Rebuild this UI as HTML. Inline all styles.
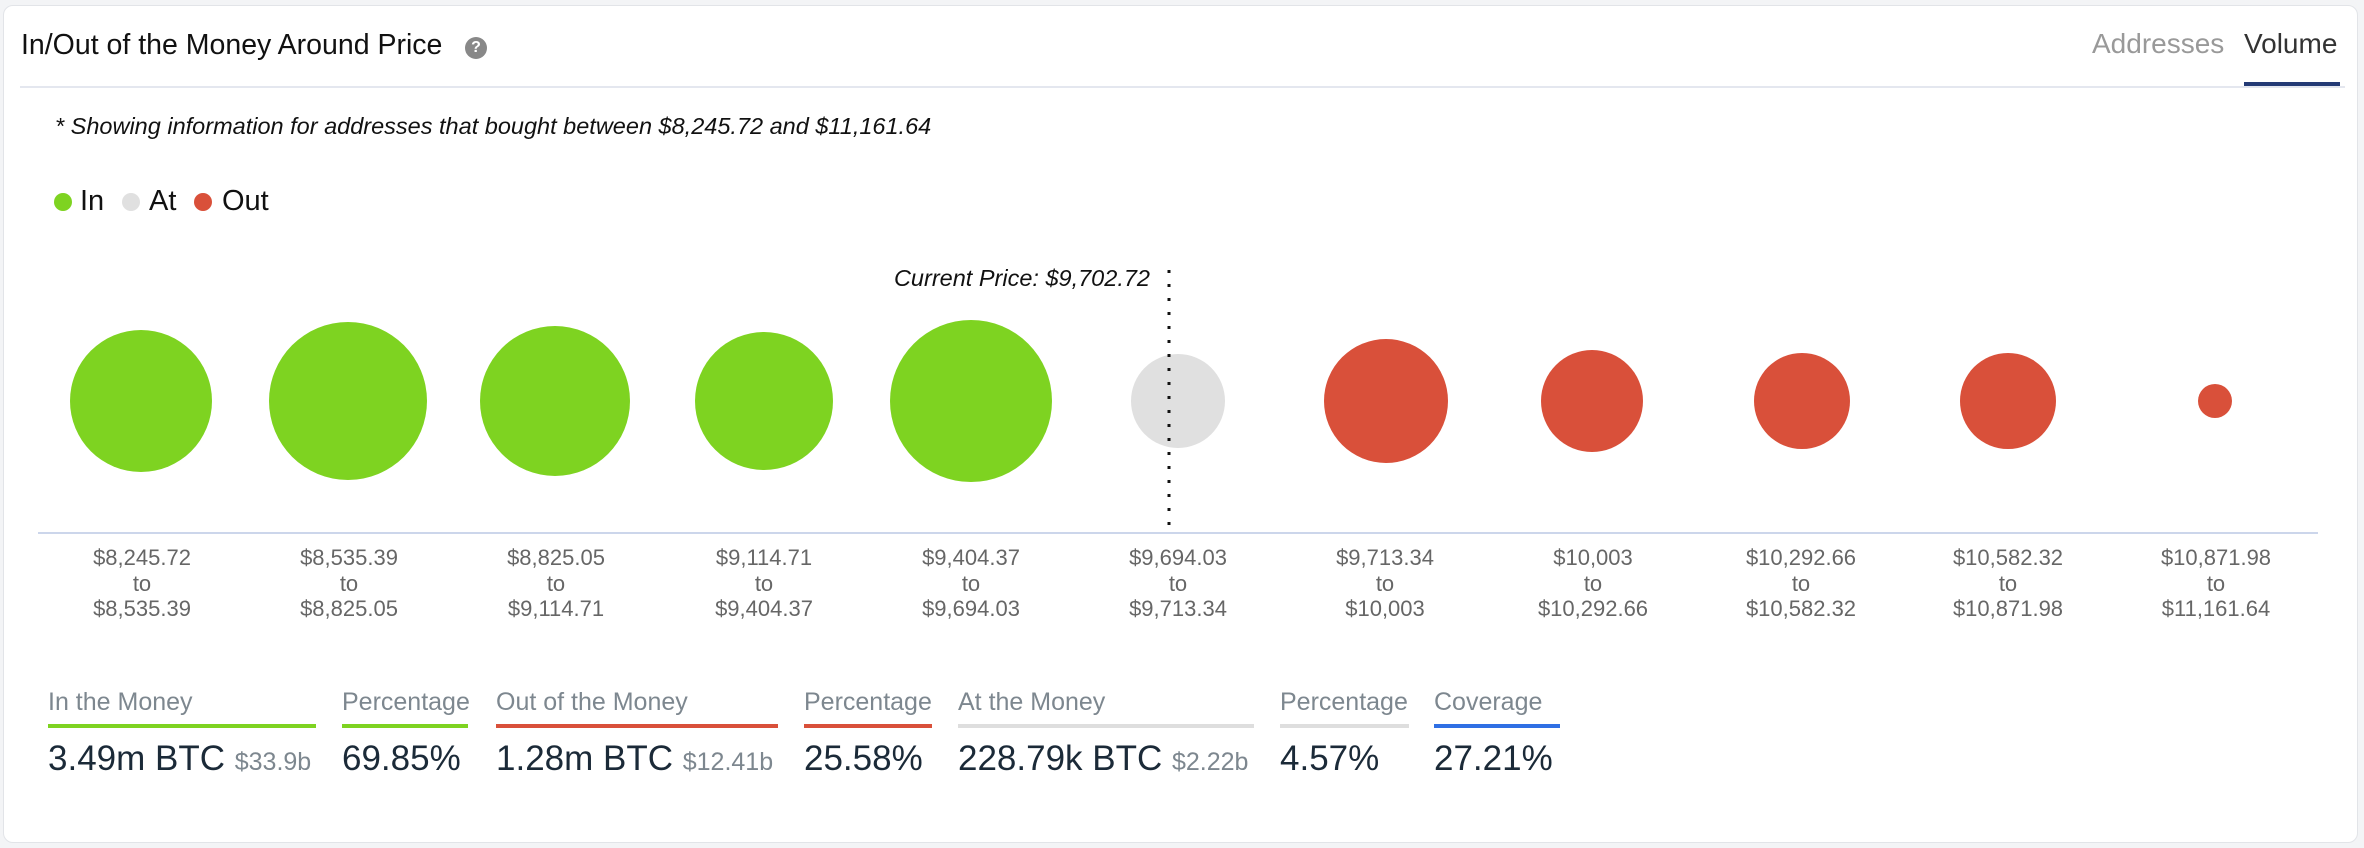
<!DOCTYPE html>
<html><head><meta charset="utf-8"><style>
html,body{margin:0;padding:0;width:2364px;height:848px;background:#f3f4f6;overflow:hidden;font-family:"Liberation Sans",sans-serif;}
.card{position:absolute;left:3px;top:5px;width:2353px;height:836px;background:#fff;border:1px solid #e2e4e8;border-radius:10px;}
.a{position:absolute;white-space:nowrap;}
.lbl{position:absolute;width:200px;text-align:center;font-size:22px;color:#666;line-height:25.5px;}
.sl{position:absolute;top:688px;font-size:25px;color:#7d878f;}
.bar{position:absolute;top:724px;height:4px;}
.sv{position:absolute;top:739px;font-size:35px;color:#1b2a38;white-space:nowrap;}
.sv small{font-size:25px;color:#7d878f;}
</style></head><body>
<div class="card"></div>
<div class="a" style="left:21px;top:29px;font-size:28.5px;color:#111;">In/Out of the Money Around Price</div>
<div class="a" style="left:465px;top:37px;width:22px;height:22px;border-radius:50%;background:#888;color:#fff;font-size:16px;font-weight:bold;text-align:center;line-height:22px;">?</div>
<div class="a" style="left:2092px;top:28px;font-size:28px;color:#999;">Addresses</div>
<div class="a" style="left:2244px;top:28px;font-size:28px;color:#333;">Volume</div>
<div class="a" style="left:20px;top:86px;width:2325px;height:2px;background:#e4e7ef;"></div>
<div class="a" style="left:2244px;top:82px;width:96px;height:4px;background:#233a75;"></div>
<div class="a" style="left:55px;top:113px;font-size:23.5px;font-style:italic;color:#111;">* Showing information for addresses that bought between $8,245.72 and $11,161.64</div>
<div class="a" style="left:54px;top:193px;width:18px;height:18px;border-radius:50%;background:#7ed321;"></div>
<div class="a" style="left:80px;top:185px;font-size:29px;color:#111;">In</div>
<div class="a" style="left:122px;top:193px;width:18px;height:18px;border-radius:50%;background:#e0e0e0;"></div>
<div class="a" style="left:149px;top:185px;font-size:29px;color:#111;">At</div>
<div class="a" style="left:194px;top:193px;width:18px;height:18px;border-radius:50%;background:#d9503a;"></div>
<div class="a" style="left:222px;top:185px;font-size:29px;color:#111;">Out</div>
<div class="a" style="right:1214px;top:265px;font-size:23.5px;font-style:italic;color:#111;">Current Price: $9,702.72</div>
<svg class="a" style="left:0;top:0" width="2364" height="848">
<circle cx="141" cy="401" r="71" fill="#7ed321"/>
<circle cx="348" cy="401" r="79" fill="#7ed321"/>
<circle cx="555" cy="401" r="75" fill="#7ed321"/>
<circle cx="764" cy="401" r="69" fill="#7ed321"/>
<circle cx="971" cy="401" r="81" fill="#7ed321"/>
<circle cx="1178" cy="401" r="47" fill="#e0e0e0"/>
<circle cx="1386" cy="401" r="62" fill="#d9503a"/>
<circle cx="1592" cy="401" r="51" fill="#d9503a"/>
<circle cx="1802" cy="401" r="48" fill="#d9503a"/>
<circle cx="2008" cy="401" r="48" fill="#d9503a"/>
<circle cx="2215" cy="401" r="17" fill="#d9503a"/>
<line x1="1169" y1="270" x2="1169" y2="533" stroke="#111" stroke-width="3" stroke-dasharray="3,11"/>
<line x1="38" y1="533" x2="2318" y2="533" stroke="#ccd6eb" stroke-width="2"/>
</svg>
<div class="lbl" style="left:42px;top:545px">$8,245.72<br>to<br>$8,535.39</div>
<div class="lbl" style="left:249px;top:545px">$8,535.39<br>to<br>$8,825.05</div>
<div class="lbl" style="left:456px;top:545px">$8,825.05<br>to<br>$9,114.71</div>
<div class="lbl" style="left:664px;top:545px">$9,114.71<br>to<br>$9,404.37</div>
<div class="lbl" style="left:871px;top:545px">$9,404.37<br>to<br>$9,694.03</div>
<div class="lbl" style="left:1078px;top:545px">$9,694.03<br>to<br>$9,713.34</div>
<div class="lbl" style="left:1285px;top:545px">$9,713.34<br>to<br>$10,003</div>
<div class="lbl" style="left:1493px;top:545px">$10,003<br>to<br>$10,292.66</div>
<div class="lbl" style="left:1701px;top:545px">$10,292.66<br>to<br>$10,582.32</div>
<div class="lbl" style="left:1908px;top:545px">$10,582.32<br>to<br>$10,871.98</div>
<div class="lbl" style="left:2116px;top:545px">$10,871.98<br>to<br>$11,161.64</div>

<div class="sl" style="left:48px">In the Money</div>
<div class="bar" style="left:48px;width:268px;background:#7ed321"></div>
<div class="sv" style="left:48px">3.49m BTC <small>$33.9b</small></div>
<div class="sl" style="left:342px">Percentage</div>
<div class="bar" style="left:342px;width:126px;background:#7ed321"></div>
<div class="sv" style="left:342px">69.85%</div>
<div class="sl" style="left:496px">Out of the Money</div>
<div class="bar" style="left:496px;width:282px;background:#d9503a"></div>
<div class="sv" style="left:496px">1.28m BTC <small>$12.41b</small></div>
<div class="sl" style="left:804px">Percentage</div>
<div class="bar" style="left:804px;width:128px;background:#d9503a"></div>
<div class="sv" style="left:804px">25.58%</div>
<div class="sl" style="left:958px">At the Money</div>
<div class="bar" style="left:958px;width:296px;background:#dedede"></div>
<div class="sv" style="left:958px">228.79k BTC <small>$2.22b</small></div>
<div class="sl" style="left:1280px">Percentage</div>
<div class="bar" style="left:1280px;width:129px;background:#dedede"></div>
<div class="sv" style="left:1280px">4.57%</div>
<div class="sl" style="left:1434px">Coverage</div>
<div class="bar" style="left:1434px;width:126px;background:#2f6fe4"></div>
<div class="sv" style="left:1434px">27.21%</div>
</body></html>
